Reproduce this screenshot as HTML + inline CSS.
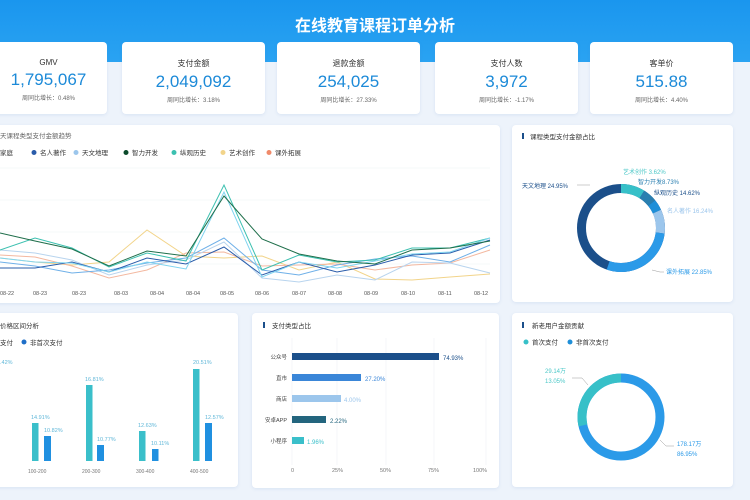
<!DOCTYPE html>
<html><head><meta charset="utf-8"><style>
*{margin:0;padding:0;box-sizing:border-box}
body{width:750px;height:500px;overflow:hidden;background:#edf3fb;font-family:"Liberation Sans","Noto Sans CJK SC",sans-serif;position:relative}
.hdr{position:absolute;left:0;top:0;width:750px;height:62px;background:linear-gradient(#1a96ee,#2aa3f2)}
.title{position:absolute;top:12px;width:750px;text-align:center;color:#fff;font-size:16px;font-weight:bold}
.card{position:absolute;background:#fff;border-radius:4px;box-shadow:0 1px 3px rgba(100,140,200,.15)}
.kpi{top:42px;height:72px;text-align:center}
.kpi .l{font-size:8px;color:#333;margin-top:16px}
.kpi .v{font-size:17px;color:#1c8ad8;margin-top:3px}
.kpi .s{font-size:6px;color:#666;margin-top:3px}
.pt{position:absolute;font-size:7px;color:#444}
svg{position:absolute;left:0;top:0}
</style></head><body>
<div class="hdr"></div>
<div class="title">在线教育课程订单分析</div>
<div class="card kpi" style="left:-10px;width:117px"><div class="l">GMV</div><div class="v">1,795,067</div><div class="s">周同比增长：0.48%</div></div>
<div class="card kpi" style="left:122px;width:143px"><div class="l">支付金额</div><div class="v">2,049,092</div><div class="s">周同比增长：3.18%</div></div>
<div class="card kpi" style="left:277px;width:143px"><div class="l">退款金额</div><div class="v">254,025</div><div class="s">周同比增长：27.33%</div></div>
<div class="card kpi" style="left:435px;width:143px"><div class="l">支付人数</div><div class="v">3,972</div><div class="s">周同比增长：-1.17%</div></div>
<div class="card kpi" style="left:590px;width:143px"><div class="l">客单价</div><div class="v">515.88</div><div class="s">周同比增长：4.40%</div></div>

<div class="card" style="left:-10px;top:125px;width:510px;height:178px"></div>
<div class="card" style="left:512px;top:125px;width:221px;height:177px"></div>
<div class="card" style="left:-10px;top:313px;width:248px;height:174px"></div>
<div class="card" style="left:252px;top:313px;width:247px;height:175px"></div>
<div class="card" style="left:512px;top:313px;width:221px;height:174px"></div>

<svg width="750" height="500" font-family="Liberation Sans, Noto Sans CJK SC, sans-serif">
<!-- line chart -->
<text x="0" y="138" font-size="6.5" fill="#666">天课程类型支付金额趋势</text>
<g font-size="6.5" fill="#333">
<text x="0" y="155">家庭</text>
<circle cx="34" cy="152.5" r="2.5" fill="#2a5caa"/><text x="40" y="155">名人著作</text>
<circle cx="76" cy="152.5" r="2.5" fill="#9cc6ec"/><text x="82" y="155">天文地理</text>
<circle cx="126" cy="152.5" r="2.5" fill="#0b4a2a"/><text x="132" y="155">智力开发</text>
<circle cx="174" cy="152.5" r="2.5" fill="#3cc0b0"/><text x="180" y="155">纵观历史</text>
<circle cx="223" cy="152.5" r="2.5" fill="#f2d48a"/><text x="229" y="155">艺术创作</text>
<circle cx="269" cy="152.5" r="2.5" fill="#f08a6a"/><text x="275" y="155">课外拓展</text>
</g>
<g stroke="#eef1f5" stroke-width="0.6">
<line x1="0" y1="168" x2="490" y2="168"/><line x1="0" y1="200" x2="490" y2="200"/><line x1="0" y1="232" x2="490" y2="232"/><line x1="0" y1="264" x2="490" y2="264"/>
</g>
<g fill="none" stroke-width="1">
<polyline stroke="#f2d48a" points="0,258 35,262 72,265 109,262 147,230 186,256 224,258 262,256 299,270 337,262 375,279 412,280 450,277 490,274"/>
<polyline stroke="#f3b8a0" points="0,255 35,257 72,266 109,278 147,270 186,253 224,252 262,266 299,265 337,264 375,270 412,265 450,263 490,250"/>
<polyline stroke="#b8d4ee" points="0,250 35,253 72,260 109,275 147,265 186,260 224,242 262,278 299,282 337,275 375,280 412,262 450,263 490,273"/>
<polyline stroke="#6fb0e8" points="0,262 35,266 72,273 109,270 147,263 186,258 224,238 262,270 299,275 337,265 375,259 412,256 450,262 490,245"/>
<polyline stroke="#2a5caa" points="0,268 35,268 72,262 109,272 147,258 186,264 224,247 262,275 299,262 337,272 375,265 412,255 450,253 490,240"/>
<polyline stroke="#3cc0b0" points="0,250 35,238 72,248 109,267 147,253 186,261 224,185 262,270 299,255 337,262 375,260 412,248 450,248 490,238"/>
<polyline stroke="#7fd4f0" points="0,258 35,262 72,263 109,272 147,262 186,269 224,192 262,277 299,262 337,268 375,261 412,254 450,252 490,238"/>
<polyline stroke="#1e6e4a" points="0,233 35,241 72,249 109,266 147,251 186,256 224,196 262,239 299,254 337,261 375,264 412,250 450,248 490,241"/>
</g>
<g font-size="5.5" fill="#555">
<text x="0" y="295">08-22</text><text x="33" y="295">08-23</text><text x="72" y="295">08-23</text><text x="114" y="295">08-03</text><text x="150" y="295">08-04</text><text x="186" y="295">08-04</text><text x="220" y="295">08-05</text><text x="255" y="295">08-06</text><text x="292" y="295">08-07</text><text x="328" y="295">08-08</text><text x="364" y="295">08-09</text><text x="401" y="295">08-10</text><text x="438" y="295">08-11</text><text x="474" y="295">08-12</text>
</g>
<!-- pie 1 -->
<rect x="522" y="133" width="2" height="6" fill="#1b4f8a"/>
<text x="530" y="139" font-size="6.5" fill="#333">课程类型支付金额占比</text>
<g fill="none" stroke-width="9" transform="rotate(-90 621 228)">
<circle cx="621" cy="228" r="39.5" stroke="#1b4f8a" stroke-dasharray="248 0"/>
<circle cx="621" cy="228" r="39.5" stroke="#37c0c8" stroke-dasharray="22 226"/>
<circle cx="621" cy="228" r="39.5" stroke="#2a7fb0" stroke-dasharray="0 22 13 213"/>
<circle cx="621" cy="228" r="39.5" stroke="#1f8fd8" stroke-dasharray="0 35 10 203"/>
<circle cx="621" cy="228" r="39.5" stroke="#9cc6ec" stroke-dasharray="0 45 22 181"/>
<circle cx="621" cy="228" r="39.5" stroke="#2b9ae8" stroke-dasharray="0 67 70 111"/>
</g>
<g font-size="6" >
<text x="623" y="174" fill="#4cc8c8">艺术创作 3.62%</text>
<text x="638" y="184" fill="#2a7fb0">智力开发8.73%</text>
<text x="654" y="195" fill="#1b4f8a">纵观历史 14.62%</text>
<text x="667" y="213" fill="#9cc6ec">名人著作 16.24%</text>
<text x="522" y="188" fill="#1b4f8a">天文地理 24.95%</text>
<text x="666" y="274" fill="#2b9ae8">课外拓展 22.85%</text>
</g>
<g stroke="#999" stroke-width="0.5" fill="none"><path d="M577 185 L590 185"/><path d="M652 270 L660 272 L664 272"/></g>
<!-- pie 2 -->
<rect x="522" y="322" width="2" height="6" fill="#1b4f8a"/>
<text x="532" y="328" font-size="6.5" fill="#333">新老用户金额贡献</text>
<circle cx="526" cy="342" r="2.5" fill="#37c0c8"/><text x="532" y="344.5" font-size="6.5" fill="#333">首次支付</text>
<circle cx="570" cy="342" r="2.5" fill="#1f8fd8"/><text x="576" y="344.5" font-size="6.5" fill="#333">非首次支付</text>
<g fill="none" stroke-width="9" transform="rotate(-90 621 417)">
<circle cx="621" cy="417" r="39" stroke="#2b9ae8"/>
<circle cx="621" cy="417" r="39" stroke="#37c0c8" stroke-dasharray="0 175 70 0"/>
</g>
<text x="545" y="373" font-size="6" fill="#4cc8c8">29.14万</text><text x="545" y="383" font-size="6" fill="#4cc8c8">13.05%</text>
<text x="677" y="446" font-size="6" fill="#2b9ae8">178.17万</text><text x="677" y="456" font-size="6" fill="#2b9ae8">86.95%</text>
<g stroke="#999" stroke-width="0.5" fill="none"><path d="M572 378 L582 378 L588 385"/><path d="M660 440 L666 446 L674 446"/></g>
<!-- bar chart left -->
<text x="0" y="328" font-size="6.5" fill="#333">价格区间分析</text>
<text x="0" y="345" font-size="6.5" fill="#333">支付</text>
<circle cx="24" cy="342" r="2.5" fill="#1f6fc8"/><text x="30" y="345" font-size="6.5" fill="#333">非首次支付</text>
<g fill="#3abfca">
<rect x="32" y="423" width="6.5" height="38"/><rect x="86" y="385" width="6.5" height="76"/><rect x="139" y="431" width="6.5" height="30"/><rect x="193" y="369" width="6.5" height="92"/>
</g>
<g fill="#2090e0">
<rect x="44" y="436" width="7" height="25"/><rect x="97" y="445" width="7" height="16"/><rect x="152" y="449" width="6.5" height="12"/><rect x="205" y="423" width="7" height="38"/>
</g>
<g font-size="5.5" fill="#5fb7d8">
<text x="0" y="364">.42%</text><text x="31" y="419">14.91%</text><text x="44" y="432">10.82%</text><text x="85" y="381">16.81%</text><text x="97" y="441">10.77%</text><text x="138" y="427">12.63%</text><text x="151" y="445">10.11%</text><text x="193" y="364">20.51%</text><text x="205" y="419">12.57%</text>
</g>
<g font-size="5" fill="#777"><text x="28" y="473">100-200</text><text x="82" y="473">200-300</text><text x="136" y="473">300-400</text><text x="190" y="473">400-500</text></g>
<!-- horizontal bar -->
<rect x="263" y="322" width="2" height="6" fill="#1b4f8a"/>
<text x="272" y="328" font-size="6.5" fill="#333">支付类型占比</text>
<g stroke="#eef1f5" stroke-width="0.6"><line x1="292" y1="338" x2="292" y2="465"/><line x1="337" y1="338" x2="337" y2="465"/><line x1="386" y1="338" x2="386" y2="465"/><line x1="434" y1="338" x2="434" y2="465"/><line x1="486" y1="338" x2="486" y2="465"/></g>
<rect x="292" y="353" width="147" height="7" fill="#1b4f8a"/>
<rect x="292" y="374" width="69" height="7" fill="#3a86d8"/>
<rect x="292" y="395" width="49" height="7" fill="#9cc6ec"/>
<rect x="292" y="416" width="34" height="7" fill="#23657e"/>
<rect x="292" y="437" width="12" height="7" fill="#3abfca"/>
<g font-size="5.5" fill="#444" text-anchor="end"><text x="287" y="359">公众号</text><text x="287" y="380">直市</text><text x="287" y="401">商店</text><text x="287" y="422">安卓APP</text><text x="287" y="443">小程序</text></g>
<g font-size="6"><text x="443" y="360" fill="#1b4f8a">74.93%</text><text x="365" y="381" fill="#3a86d8">27.20%</text><text x="344" y="402" fill="#9cc6ec">4.00%</text><text x="330" y="423" fill="#23657e">2.22%</text><text x="307" y="444" fill="#3abfca">1.96%</text></g>
<g font-size="5.5" fill="#777"><text x="291" y="472">0</text><text x="332" y="472">25%</text><text x="380" y="472">50%</text><text x="428" y="472">75%</text><text x="473" y="472">100%</text></g>
</svg>
</body></html>
